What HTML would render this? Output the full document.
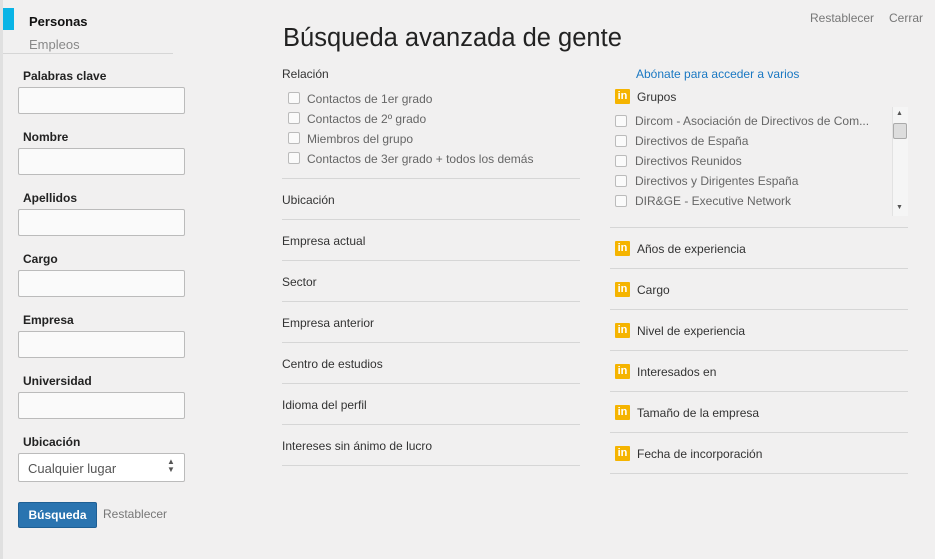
<!DOCTYPE html>
<html><head><meta charset="utf-8"><style>
*{margin:0;padding:0;box-sizing:border-box}
body{width:935px;height:559px;background:#f1f0f0;font-family:"Liberation Sans",sans-serif;position:relative;overflow:hidden;color:#333}
.a{position:absolute;white-space:nowrap}
.lbl{font-size:12px;font-weight:bold;color:#222}
.inp{position:absolute;left:18px;width:167px;height:27px;border:1px solid #bbb;border-radius:2px;background:#fafafa}
.t{font-size:12px;color:#333}
.cb{position:absolute;width:12px;height:12px;border:1px solid #bbb;border-radius:2px;background:#fafafa}
.g{font-size:12px;color:#666}
.hl{position:absolute;height:1px;background:#d6d6d6}
.ic{position:absolute;width:15px;height:15px;background:#f5b400;color:#fff;font-size:11px;font-weight:bold;text-align:center;line-height:15px;border-radius:1px}
</style></head><body>
<div class="a" style="left:0;top:0;width:3px;height:559px;background:#e0e0e0"></div>
<div class="a" style="left:3px;top:8px;width:11px;height:22px;background:#0ab4e6"></div>
<div class="a" style="left:29px;top:14px;font-size:13px;font-weight:bold;color:#111">Personas</div>
<div class="a" style="left:29px;top:37px;font-size:13px;color:#888">Empleos</div>
<div class="hl" style="left:3px;top:53px;width:170px"></div>

<div class="a lbl" style="left:23px;top:69px">Palabras clave</div><div class="inp" style="top:87px"></div>
<div class="a lbl" style="left:23px;top:130px">Nombre</div><div class="inp" style="top:148px"></div>
<div class="a lbl" style="left:23px;top:191px">Apellidos</div><div class="inp" style="top:209px"></div>
<div class="a lbl" style="left:23px;top:252px">Cargo</div><div class="inp" style="top:270px"></div>
<div class="a lbl" style="left:23px;top:313px">Empresa</div><div class="inp" style="top:331px"></div>
<div class="a lbl" style="left:23px;top:374px">Universidad</div><div class="inp" style="top:392px"></div>
<div class="a lbl" style="left:23px;top:435px">Ubicación</div><div class="inp" style="top:453px;height:29px;background:#fff"></div>
<div class="a" style="left:28px;top:461px;font-size:13px;color:#555">Cualquier lugar</div>
<div class="a" style="left:167px;top:458px;font-size:8px;color:#555;line-height:8px">▲<br>▼</div>
<div class="a" style="left:18px;top:502px;width:79px;height:26px;background:#2a74b0;border:1px solid #1e5f94;border-radius:2px;color:#fff;font-size:12px;font-weight:bold;text-align:center;line-height:24px">Búsqueda</div>
<div class="a" style="left:103px;top:507px;font-size:12px;color:#777">Restablecer</div>

<div class="a" style="left:810px;top:11px;font-size:12px;color:#777">Restablecer</div>
<div class="a" style="left:889px;top:11px;font-size:12px;color:#777">Cerrar</div>

<div class="a" style="left:283px;top:24px;font-size:25.5px;color:#222">Búsqueda avanzada de gente</div>
<div class="a t" style="left:282px;top:67px">Relación</div>
<div class="cb" style="left:288px;top:92px"></div><div class="a g" style="left:307px;top:92px">Contactos de 1er grado</div>
<div class="cb" style="left:288px;top:112px"></div><div class="a g" style="left:307px;top:112px">Contactos de 2º grado</div>
<div class="cb" style="left:288px;top:132px"></div><div class="a g" style="left:307px;top:132px">Miembros del grupo</div>
<div class="cb" style="left:288px;top:152px"></div><div class="a g" style="left:307px;top:152px">Contactos de 3er grado + todos los demás</div>
<div class="hl" style="left:282px;top:178px;width:298px"></div>
<div class="a t" style="left:282px;top:193px">Ubicación</div>
<div class="hl" style="left:282px;top:219px;width:298px"></div>
<div class="a t" style="left:282px;top:234px">Empresa actual</div>
<div class="hl" style="left:282px;top:260px;width:298px"></div>
<div class="a t" style="left:282px;top:275px">Sector</div>
<div class="hl" style="left:282px;top:301px;width:298px"></div>
<div class="a t" style="left:282px;top:316px">Empresa anterior</div>
<div class="hl" style="left:282px;top:342px;width:298px"></div>
<div class="a t" style="left:282px;top:357px">Centro de estudios</div>
<div class="hl" style="left:282px;top:383px;width:298px"></div>
<div class="a t" style="left:282px;top:398px">Idioma del perfil</div>
<div class="hl" style="left:282px;top:424px;width:298px"></div>
<div class="a t" style="left:282px;top:439px">Intereses sin ánimo de lucro</div>
<div class="hl" style="left:282px;top:465px;width:298px"></div>

<div class="a" style="left:636px;top:67px;font-size:12px;color:#1a78c2">Abónate para acceder a varios</div>
<div class="ic" style="left:615px;top:89px">in</div><div class="a t" style="left:637px;top:90px">Grupos</div>
<div class="a" style="left:892px;top:107px;width:16px;height:109px;background:#f5f5f5;border-left:1px solid #e2e2e2"></div>
<div class="a" style="left:893px;top:123px;width:14px;height:16px;background:#ddd;border:1px solid #aaa;border-radius:2px"></div>
<div class="a" style="left:896px;top:110px;font-size:7px;color:#555">▲</div>
<div class="a" style="left:896px;top:204px;font-size:7px;color:#555">▼</div>
<div class="cb" style="left:615px;top:115px"></div><div class="a g" style="left:635px;top:114px">Dircom - Asociación de Directivos de Com...</div>
<div class="cb" style="left:615px;top:135px"></div><div class="a g" style="left:635px;top:134px">Directivos de España</div>
<div class="cb" style="left:615px;top:155px"></div><div class="a g" style="left:635px;top:154px">Directivos Reunidos</div>
<div class="cb" style="left:615px;top:175px"></div><div class="a g" style="left:635px;top:174px">Directivos y Dirigentes España</div>
<div class="cb" style="left:615px;top:195px"></div><div class="a g" style="left:635px;top:194px">DIR&amp;GE - Executive Network</div>
<div class="hl" style="left:610px;top:227px;width:298px"></div>
<div class="ic" style="left:615px;top:241px">in</div><div class="a t" style="left:637px;top:242px">Años de experiencia</div>
<div class="hl" style="left:610px;top:268px;width:298px"></div>
<div class="ic" style="left:615px;top:282px">in</div><div class="a t" style="left:637px;top:283px">Cargo</div>
<div class="hl" style="left:610px;top:309px;width:298px"></div>
<div class="ic" style="left:615px;top:323px">in</div><div class="a t" style="left:637px;top:324px">Nivel de experiencia</div>
<div class="hl" style="left:610px;top:350px;width:298px"></div>
<div class="ic" style="left:615px;top:364px">in</div><div class="a t" style="left:637px;top:365px">Interesados en</div>
<div class="hl" style="left:610px;top:391px;width:298px"></div>
<div class="ic" style="left:615px;top:405px">in</div><div class="a t" style="left:637px;top:406px">Tamaño de la empresa</div>
<div class="hl" style="left:610px;top:432px;width:298px"></div>
<div class="ic" style="left:615px;top:446px">in</div><div class="a t" style="left:637px;top:447px">Fecha de incorporación</div>
<div class="hl" style="left:610px;top:473px;width:298px"></div>
</body></html>
